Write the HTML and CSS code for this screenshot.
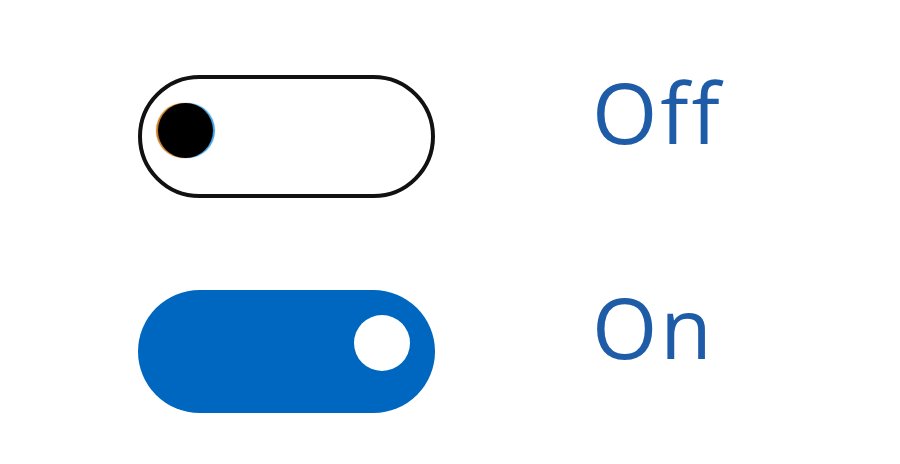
FILE: index.html
```html
<!DOCTYPE html>
<html>
<head>
<meta charset="utf-8">
<link rel="stylesheet" href="styles.css">
</head>
<body>
<div class="list">
  <div class="toggle toggle-off"><span class="knob"></span></div>
  <div class="label">Off</div>
  <div class="toggle toggle-on"><span class="knob"></span></div>
  <div class="label">On</div>
</div>
</body>
</html>
```

FILE: styles.css
```css
html, body {
  margin: 0;
  background: #ffffff;
}
.list {
  display: grid;
  grid-template-columns: 297px auto;
  grid-auto-rows: 123px;
  column-gap: 157px;
  row-gap: 92px;
  padding: 75px 0 0 138px;
  justify-content: start;
}
.toggle {
  box-sizing: border-box;
  width: 297px;
  height: 123px;
  border-radius: 62px;
  display: flex;
  align-items: flex-start;
}
.toggle-off {
  border: 4px solid #111111;
  background: #ffffff;
  padding: 24px 0 0 16px;
}
.toggle-off .knob {
  width: 55px;
  height: 55px;
  border-radius: 50%;
  background: #000000;
  box-shadow: -2px 0 1px #c77a1c, 2px 0 1px #3aa0e0;
}
.toggle-on {
  background: #0067c0;
  justify-content: flex-end;
  padding: 25px 25px 0 0;
}
.toggle-on .knob {
  width: 56px;
  height: 56px;
  border-radius: 50%;
  background: #ffffff;
}
.label {
  font-family: "Open Sans", "Noto Sans", sans-serif;
  font-size: 84px;
  line-height: 1;
  letter-spacing: 3px;
  color: #1f5ca8;
  margin-top: -5px;
}
```
